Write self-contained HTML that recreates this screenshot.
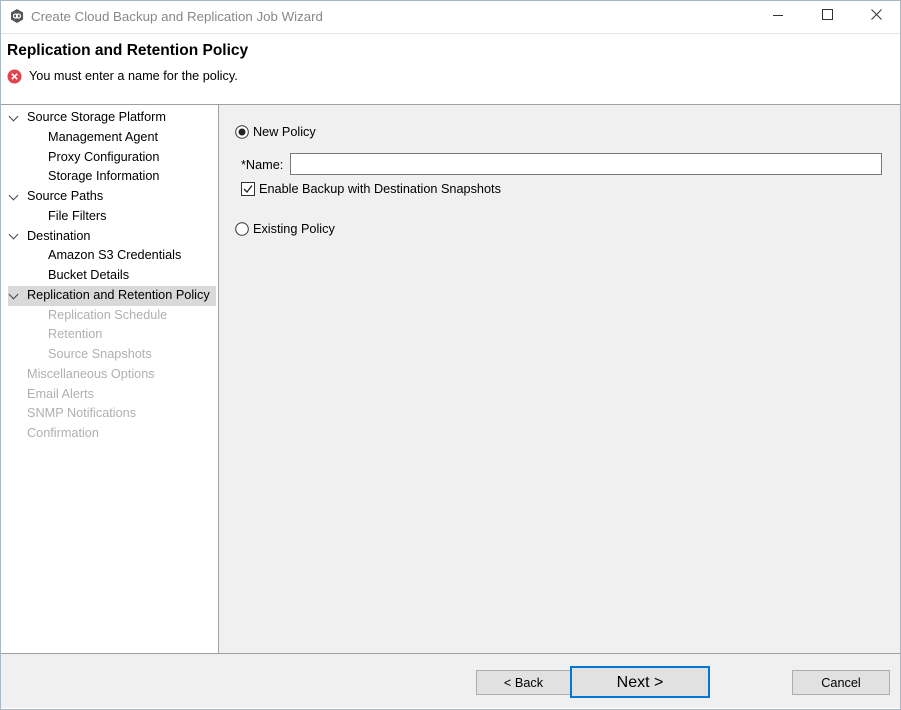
<!DOCTYPE html>
<html><head><style>
body{margin:0;width:901px;height:710px;overflow:hidden;font-family:"Liberation Sans",sans-serif;font-size:12.7px;color:#000;background:#fff;position:relative}
.a{position:absolute}
.win{position:absolute;left:0;top:0;width:899px;height:708px;border:1px solid #a9b6c4}
.tree div{position:absolute;height:20px;line-height:21px;white-space:nowrap}
.dis{color:#b0b0b0}
.chev{position:absolute;width:6px;height:6px;border-right:1.5px solid #444;border-bottom:1.5px solid #444;transform:rotate(45deg)}
.btn{position:absolute;background:#e1e1e1;border:1px solid #adadad;text-align:center;box-sizing:border-box}
</style></head><body>
<div class="win"></div>
<svg class="a" style="left:9px;top:8px" width="16" height="16"><polygon points="8,1 14,4.5 14,11.5 8,15 2,11.5 2,4.5" fill="#555"/><circle cx="6.5" cy="8" r="2" fill="none" stroke="#fff" stroke-width="1.2"/><circle cx="9.5" cy="8" r="2" fill="none" stroke="#fff" stroke-width="1.2"/></svg>
<div class="a" style="left:31px;top:9px;color:#888;font-size:13.3px">Create Cloud Backup and Replication Job Wizard</div>
<div class="a" style="left:773px;top:15px;width:10px;height:1px;background:#333"></div>
<div class="a" style="left:822px;top:9px;width:9px;height:9px;border:1px solid #333"></div>
<svg class="a" style="left:871px;top:9px" width="11" height="11"><path d="M0.5 0.5L10.5 10.5M10.5 0.5L0.5 10.5" stroke="#333" stroke-width="1"/></svg>
<div class="a" style="left:1px;top:33px;width:899px;height:1px;background:#e5e5e5"></div>
<div class="a" style="left:7px;top:42px;font-size:15.5px;font-weight:bold">Replication and Retention Policy</div>
<svg class="a" style="left:7px;top:69px" width="15" height="15"><circle cx="7.5" cy="7.5" r="7" fill="#e0444c"/><path d="M4.8 4.8L10.2 10.2M10.2 4.8L4.8 10.2" stroke="#fff" stroke-width="1.6"/></svg>
<div class="a" style="left:29px;top:69px">You must enter a name for the policy.</div>
<div class="a" style="left:1px;top:104px;width:899px;height:1px;background:#a0a0a0"></div>
<div class="a" style="left:1px;top:105px;width:217px;height:548px;background:#fff;border-right:1px solid #a0a0a0"></div>
<div class="a" style="left:8px;top:286px;width:208px;height:20px;background:#d9d9d9"></div>
<div class="chev" style="left:10px;top:113px"></div>
<div class="chev" style="left:10px;top:192px"></div>
<div class="chev" style="left:10px;top:231px"></div>
<div class="chev" style="left:10px;top:291px"></div>
<div class="tree">
<div style="left:27px;top:107px">Source Storage Platform</div>
<div style="left:48px;top:127px">Management Agent</div>
<div style="left:48px;top:147px">Proxy Configuration</div>
<div style="left:48px;top:166px">Storage Information</div>
<div style="left:27px;top:186px">Source Paths</div>
<div style="left:48px;top:206px">File Filters</div>
<div style="left:27px;top:226px">Destination</div>
<div style="left:48px;top:245px">Amazon S3 Credentials</div>
<div style="left:48px;top:265px">Bucket Details</div>
<div style="left:27px;top:285px">Replication and Retention Policy</div>
<div class="dis" style="left:48px;top:305px">Replication Schedule</div>
<div class="dis" style="left:48px;top:324px">Retention</div>
<div class="dis" style="left:48px;top:344px">Source Snapshots</div>
<div class="dis" style="left:27px;top:364px">Miscellaneous Options</div>
<div class="dis" style="left:27px;top:384px">Email Alerts</div>
<div class="dis" style="left:27px;top:403px">SNMP Notifications</div>
<div class="dis" style="left:27px;top:423px">Confirmation</div>
</div>
<div class="a" style="left:219px;top:105px;width:681px;height:548px;background:#f0f0f0"></div>
<svg class="a" style="left:235px;top:125px" width="14" height="14"><circle cx="7" cy="7" r="6.3" fill="#fff" stroke="#333"/><circle cx="7" cy="7" r="3.5" fill="#222"/></svg>
<div class="a" style="left:253px;top:125px">New Policy</div>
<div class="a" style="left:241px;top:158px">*Name:</div>
<div class="a" style="left:290px;top:153px;width:592px;height:22px;background:#fff;border:1px solid #7a7a7a;box-sizing:border-box"></div>
<svg class="a" style="left:241px;top:182px" width="14" height="14"><rect x="0.5" y="0.5" width="13" height="13" fill="#fff" stroke="#333"/><path d="M3 7L6 10L11 3.5" fill="none" stroke="#222" stroke-width="1.3"/></svg>
<div class="a" style="left:259px;top:182px">Enable Backup with Destination Snapshots</div>
<svg class="a" style="left:235px;top:222px" width="14" height="14"><circle cx="7" cy="7" r="6.3" fill="#fff" stroke="#333"/></svg>
<div class="a" style="left:253px;top:222px">Existing Policy</div>
<div class="a" style="left:1px;top:653px;width:899px;height:1px;background:#a0a0a0"></div>
<div class="a" style="left:1px;top:654px;width:899px;height:54px;background:#f0f0f0"></div>
<div class="btn" style="left:476px;top:670px;width:95px;height:25px;line-height:24px">&lt; Back</div>
<div class="btn" style="left:570px;top:666px;width:140px;height:32px;line-height:29px;border:2px solid #0078d7;font-size:16px">Next &gt;</div>
<div class="btn" style="left:792px;top:670px;width:98px;height:25px;line-height:24px">Cancel</div>
</body></html>
